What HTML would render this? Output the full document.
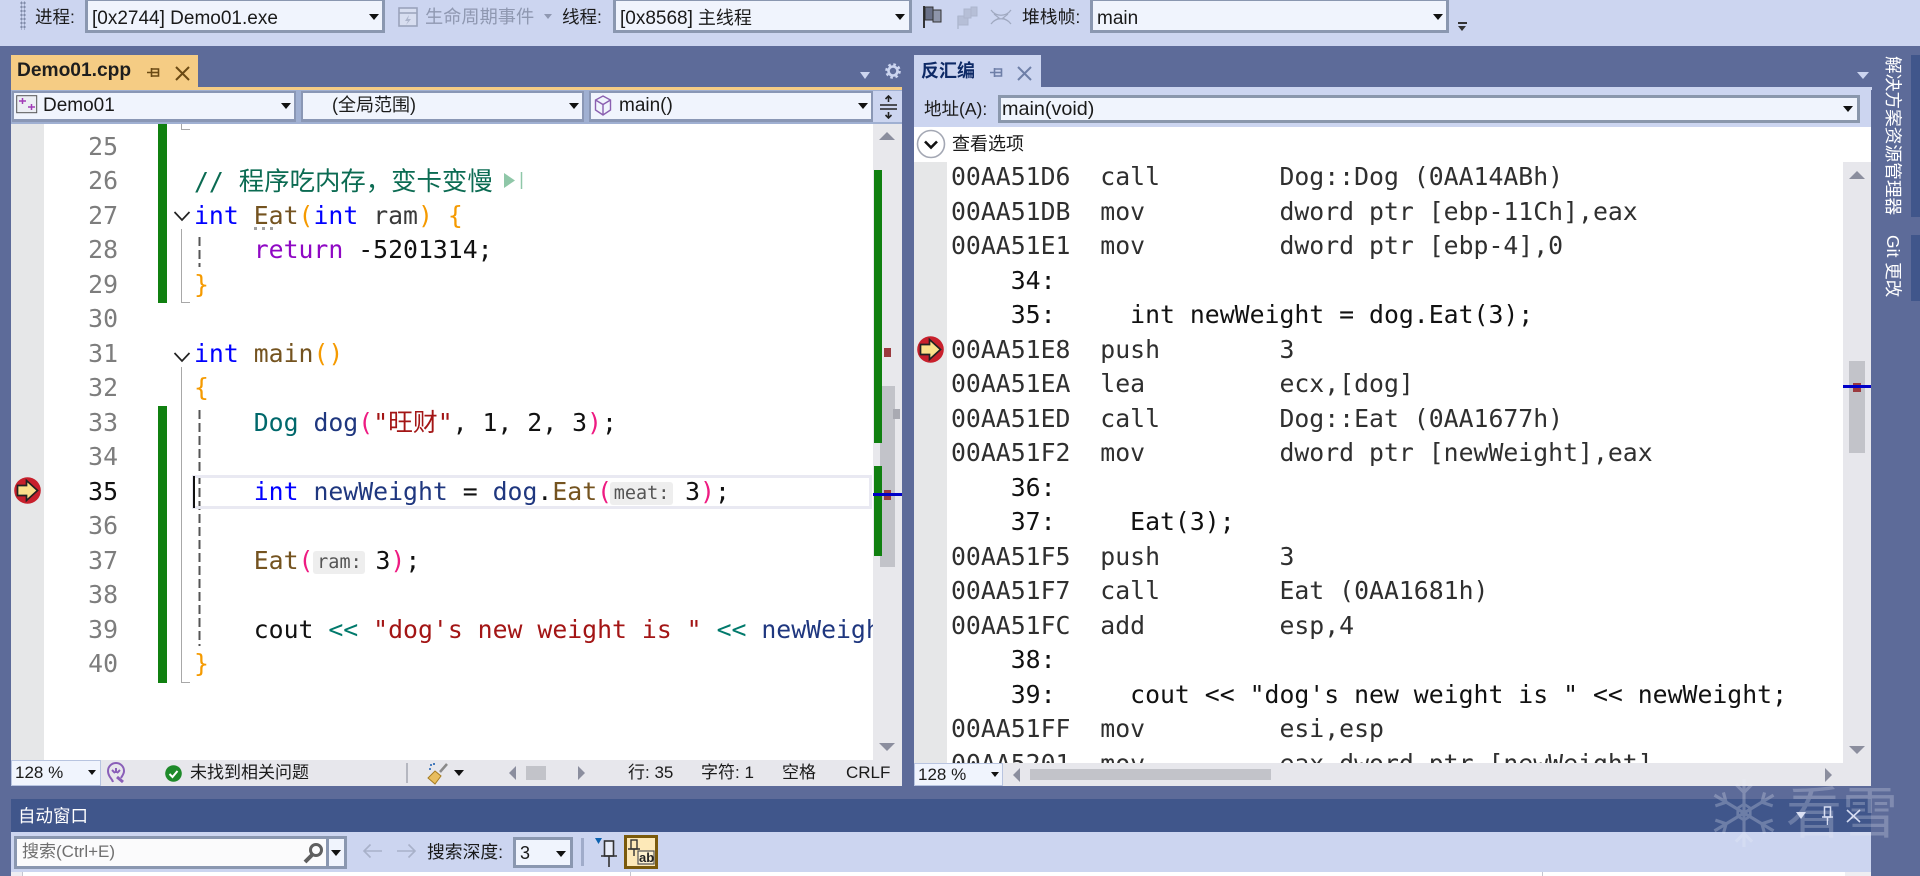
<!DOCTYPE html>
<html lang="zh"><head><meta charset="utf-8"><title>Demo01</title>
<style>
html,body{margin:0;padding:0;width:1920px;height:876px;overflow:hidden;background:#5d6b99}
body{position:relative;font-family:"Liberation Sans","Noto Sans CJK SC",sans-serif;font-size:18px;color:#1a1a1a}
.a,.t,.b,.dd,.up,.dn,.lf,.rt,svg{position:absolute}
.t{white-space:pre;line-height:24px}
.b{box-sizing:border-box}
.cb{position:absolute;box-sizing:border-box;border:3px solid #8a97b0;background:#f0f4fd;white-space:pre;line-height:26px;padding-left:4px}
.la{font-size:19px}
.dd{width:0;height:0;border-left:5.5px solid transparent;border-right:5.5px solid transparent;border-top:6px solid #111}
.up{width:0;height:0;border-left:8px solid transparent;border-right:8px solid transparent;border-bottom:8px solid #8b8e9e}
.dn{width:0;height:0;border-left:8px solid transparent;border-right:8px solid transparent;border-top:8px solid #8b8e9e}
.lf{width:0;height:0;border-top:7px solid transparent;border-bottom:7px solid transparent;border-right:7px solid #8b8e9e}
.rt{width:0;height:0;border-top:7px solid transparent;border-bottom:7px solid transparent;border-left:7px solid #8b8e9e}
.m{font-family:"DejaVu Sans Mono","Noto Sans CJK SC",monospace;font-size:24.8px;line-height:34.5px;white-space:normal}
.m div{height:34.5px;white-space:pre}
.n{color:#7d7d7d;text-align:right}
.k{color:#0000ff}.f{color:#74531f}.o{color:#f59a00}.p{color:#ee1b82}.r{color:#8f08c4}.c{color:#0b6b52}.y{color:#00686b}.v{color:#1f377f}.s{color:#a31515}.l{color:#00796b}
.h{display:inline-block;box-sizing:border-box;height:23px;line-height:23px;background:#eeeeee;color:#555;font-size:18.5px;border-radius:3px;text-align:center;vertical-align:1px}
.as{color:#2f2f2f}
</style></head><body>

<!-- top toolbar -->
<div class="b" style="left:0;top:0;width:1920px;height:46px;background:#ccd5f0"></div>
<div class="b" style="left:20px;top:1px;width:6px;height:29px;background-image:radial-gradient(#7f8aa8 1px,transparent 1.2px);background-size:3px 4px"></div>
<div class="t" style="left:35px;top:5px;font-size:17.5px">进程:</div>
<div class="cb" style="left:85px;top:-2px;width:300px;height:35px;padding-top:4px"><span class="la">[0x2744] Demo01.exe</span></div>
<div class="dd" style="left:369px;top:14px"></div>
<svg style="left:398px;top:7px" width="20" height="20" viewBox="0 0 20 20"><rect x="1" y="1" width="18" height="18" fill="#d8def0" stroke="#9aa3bb" stroke-width="1.6"/><path d="M1 6h18" stroke="#9aa3bb" stroke-width="1.6"/><path d="M11 8l-4 6h3l-2 4 5-6h-3z" fill="#aeb6cc"/></svg>
<div class="t" style="left:425px;top:5px;font-size:18.2px;color:#8f98b1">生命周期事件</div>
<div class="dd" style="left:544px;top:14px;border-top-color:#8f98b1;border-left-width:4px;border-right-width:4px;border-top-width:5px"></div>
<div class="t" style="left:562px;top:5px;font-size:17.5px">线程:</div>
<div class="cb" style="left:613px;top:-2px;width:299px;height:35px;padding-top:4px"><span class="la">[0x8568]</span> 主线程</div>
<div class="dd" style="left:895px;top:14px"></div>
<svg style="left:922px;top:5px" width="22" height="24" viewBox="0 0 22 24"><path d="M2 1v22" stroke="#222" stroke-width="1.8"/><rect x="3" y="2" width="8" height="13" fill="#6a7189" stroke="#333"/><rect x="11" y="5" width="8" height="12" fill="#8e95aa" stroke="#333"/></svg>
<svg style="left:956px;top:5px" width="24" height="24" viewBox="0 0 24 24" opacity=".6"><g fill="#a9b2c8" stroke="#9aa3b9"><rect x="2" y="11" width="10" height="9"/><rect x="8" y="4" width="7" height="9"/><rect x="15" y="2" width="6" height="9"/></g><path d="M2 11v13" stroke="#9aa3b9" stroke-width="1.4"/></svg>
<svg style="left:990px;top:8px" width="22" height="18" viewBox="0 0 22 18" fill="none" stroke="#a0a9c0" stroke-width="1.2"><path d="M1 2c5 7 15 7 20 0M1 16c5-7 15-7 20 0"/><path d="M4 6l5 4-5 3M18 6l-5 4 5 3"/></svg>
<div class="t" style="left:1022px;top:5px;font-size:17.8px">堆栈帧:</div>
<div class="cb" style="left:1090px;top:-2px;width:359px;height:35px;padding-top:4px"><span class="la">main</span></div>
<div class="dd" style="left:1433px;top:14px"></div>
<div class="b" style="left:1458px;top:22px;width:9px;height:2px;background:#333"></div>
<div class="dd" style="left:1458px;top:26px;border-left-width:4.5px;border-right-width:4.5px;border-top-width:5px;border-top-color:#333"></div>

<!-- left panel tab -->
<div class="b" style="left:11px;top:55px;width:187px;height:32px;background:#f5cc84"></div>
<div class="t" style="left:17px;top:59px;font-weight:bold;font-size:19.2px;color:#1e1e1e">Demo01.cpp</div>
<svg style="left:147px;top:66px" width="13" height="13" viewBox="0 0 13 13"><path d="M0 6.5h5M4.5 2v9M4.500 3h7v7h-7" stroke="#6b4a14" stroke-width="1.6" fill="none"/><path d="M5 6.500h6" stroke="#6b4a14" stroke-width="1.6"/></svg>
<svg style="left:175px;top:66px" width="15" height="15" viewBox="0 0 15 15"><path d="M1 1l13 13M14 1L1 14" stroke="#6b4a14" stroke-width="2"/></svg>
<div class="dd" style="left:860px;top:72px;border-top-color:#ccd5f0;border-left-width:5.5px;border-right-width:5.5px;border-top-width:7px"></div>
<svg style="left:885px;top:63px" width="16" height="16" viewBox="0 0 16 16"><circle cx="8" cy="8" r="4.5" fill="none" stroke="#ccd5f0" stroke-width="2.6"/><circle cx="8" cy="8" r="6.6" fill="none" stroke="#ccd5f0" stroke-width="2.4" stroke-dasharray="2.6 2.6"/></svg>
<div class="b" style="left:11px;top:87px;width:891px;height:4px;background:#f5cc84"></div>
<div class="b" style="left:11px;top:90px;width:891px;height:34px;background:#a0b0d2"></div>
<div class="b" style="left:873px;top:91px;width:29px;height:31px;background:#ccd5f0"></div>

<div class="cb" style="left:12px;top:91px;width:284px;height:31px;padding-left:29px;line-height:25px;border-color:#8a97b5;border-width:2px 2px 3px 2px"><span class="la">Demo01</span></div>
<svg style="left:16px;top:95px" width="22" height="19" viewBox="0 0 22 19"><rect x=".7" y=".7" width="20" height="17" fill="#eceef4" stroke="#555"/><path d="M3 6h7M6.5 3v6M12 12h7M15.5 9v6" stroke="#a13bb8" stroke-width="1.5"/></svg>
<div class="dd" style="left:281px;top:103px"></div>
<div class="cb" style="left:301px;top:91px;width:283px;height:31px;padding-left:29px;line-height:25px;border-color:#8a97b5;border-width:2px 2px 3px 2px">(全局范围)</div>
<div class="dd" style="left:569px;top:103px"></div>
<div class="cb" style="left:589px;top:91px;width:284px;height:31px;padding-left:28px;line-height:25px;border-color:#8a97b5;border-width:2px 2px 3px 2px"><span class="la">main()</span></div>
<svg style="left:594px;top:95px" width="18" height="21" viewBox="0 0 18 21" fill="none" stroke="#8a5fb0" stroke-width="1.4"><path d="M9 1l7.5 4v10L9 20 1.5 15V5zM1.5 5L9 9.5 16.5 5M9 9.5V20"/></svg>
<div class="dd" style="left:858px;top:103px"></div>
<svg style="left:880px;top:95px" width="17" height="24" viewBox="0 0 17 24" fill="none" stroke="#222" stroke-width="1.6"><path d="M0 10h17M0 14h17M8.5 1v6M8.5 17v6M5.5 4l3-3 3 3M5.5 20l3 3 3-3"/></svg>

<!-- left editor -->
<div class="b" style="left:11px;top:124px;width:862px;height:636px;background:#fff"></div>
<div class="b" style="left:11px;top:124px;width:33px;height:636px;background:#e6e7e8"></div>
<div class="b" style="left:873px;top:124px;width:29px;height:636px;background:#e8e8ec"></div>

<div class="a m n" style="left:60px;top:129.5px;width:58px"><div>25</div><div>26</div><div>27</div><div>28</div><div>29</div><div>30</div><div>31</div><div>32</div><div>33</div><div>34</div><div style="color:#111">35</div><div>36</div><div>37</div><div>38</div><div>39</div><div>40</div></div>

<div class="b" style="left:158px;top:124px;width:9px;height:179px;background:#108010"></div>
<div class="b" style="left:158px;top:406px;width:9px;height:277px;background:#108010"></div>

<!-- outlining -->
<div class="b" style="left:181px;top:124px;width:9px;height:6px;border-left:1.5px solid #a8a8a8;border-bottom:1.5px solid #a8a8a8"></div>
<div class="b" style="left:181px;top:229px;width:9px;height:74px;border-left:1.5px solid #a8a8a8;border-bottom:1.5px solid #a8a8a8"></div>
<div class="b" style="left:181px;top:367px;width:9px;height:316px;border-left:1.5px solid #a8a8a8;border-bottom:1.5px solid #a8a8a8"></div>
<svg style="left:173px;top:210px" width="18" height="12" viewBox="0 0 18 12"><path d="M1.5 2l7.5 8 7.5-8" fill="none" stroke="#222" stroke-width="1.7"/></svg>
<svg style="left:173px;top:351px" width="18" height="12" viewBox="0 0 18 12"><path d="M1.5 2l7.5 8 7.5-8" fill="none" stroke="#222" stroke-width="1.7"/></svg>
<svg style="left:198px;top:237px" width="3" height="30" viewBox="0 0 3 30"><path d="M1.5 0V30" stroke="#555" stroke-width="2" stroke-dasharray="9 4"/></svg>
<svg style="left:198px;top:410px" width="3" height="236" viewBox="0 0 3 236"><path d="M1.5 0V236" stroke="#555" stroke-width="2" stroke-dasharray="9 4"/></svg>

<!-- current line -->
<div class="b" style="left:192px;top:475px;width:680px;height:34px;border:3px solid #e9e9f2"></div>
<div class="b" style="left:193px;top:476px;width:2px;height:32px;background:#111"></div>

<div class="a m" style="left:194px;top:124px;width:679px;height:636px;overflow:hidden;padding-top:5.5px;color:#111;box-sizing:border-box"><div> </div><div class="c">// <span style="font-size:25.4px">程序吃内存，变卡变慢</span></div><div><span class="k">int</span> <span class="f">Eat</span><span class="o">(</span><span class="k">int</span> <span style="color:#3a3a3a">ram</span><span class="o">)</span> <span class="o">{</span></div><div>    <span class="r">return</span> -5201314;</div><div><span class="o">}</span></div><div> </div><div><span class="k">int</span> <span class="f">main</span><span class="o">()</span></div><div><span class="o">{</span></div><div>    <span class="y">Dog</span> <span class="v">dog</span><span class="p">(</span><span class="s">"旺财"</span>, 1, 2, 3<span class="p">)</span>;</div><div> </div><div>    <span class="k">int</span> <span class="v">newWeight</span> = <span class="v">dog</span>.<span class="f">Eat</span><span class="p">(</span><span class="h" style="width:63px;margin:0 12px 0 -2px;">meat:</span>3<span class="p">)</span>;</div><div> </div><div>    <span class="f">Eat</span><span class="p">(</span><span class="h" style="width:52px;margin:0 10px 0 0;">ram:</span>3<span class="p">)</span>;</div><div> </div><div>    cout <span class="l">&lt;&lt;</span> <span class="s">"dog's new weight is "</span> <span class="l">&lt;&lt;</span> <span class="v">newWeight</span>;</div><div><span class="o">}</span></div></div>
<svg style="left:254px;top:226px" width="21" height="5" viewBox="0 0 21 5" fill="#a0a0a0"><rect x="0" y="1" width="3" height="3"/><rect x="8" y="1" width="3" height="3"/><rect x="16" y="1" width="3" height="3"/></svg>
<svg style="left:504px;top:171px" width="19" height="19" viewBox="0 0 19 19"><path d="M0 2l11 7.500L0 17z" fill="#8fc7a8"/><path d="M17.500 1v17" stroke="#8fc7a8" stroke-width="1.500"/></svg>

<!-- left scrollbar -->
<div class="up" style="left:879px;top:132px"></div>
<div class="dn" style="left:879px;top:743px"></div>
<div class="b" style="left:880px;top:386px;width:15px;height:181px;background:#c2c3c9"></div>
<div class="b" style="left:893px;top:409px;width:7px;height:10px;background:#a9aab2"></div>
<div class="b" style="left:874px;top:170px;width:8px;height:273px;background:#108010"></div>
<div class="b" style="left:874px;top:466px;width:8px;height:90px;background:#108010"></div>
<div class="b" style="left:884px;top:348px;width:7px;height:9px;background:#9b3a3f"></div>
<div class="b" style="left:884px;top:490px;width:7px;height:10px;background:#9b3a3f"></div>
<div class="b" style="left:873px;top:493px;width:29px;height:3px;background:#0000c8"></div>

<svg style="left:14px;top:477px" width="27" height="27" viewBox="0 0 27 27"><circle cx="13.500" cy="13.500" r="13.300" fill="#c8202c"/><path d="M3.500 8.500h9V3.500l11 10-11 10v-5h-9z" fill="#fbe08a" stroke="#222" stroke-width="1.700"/></svg>

<!-- left status -->
<div class="b" style="left:11px;top:760px;width:891px;height:26px;background:#e7e7ec"></div>
<div class="b" style="left:11px;top:760px;width:90px;height:26px;background:#f0f4fd;border:1.500px solid #b8c4e0"></div>
<div class="t" style="left:15px;top:761px;font-size:17px">128 %</div>
<div class="dd" style="left:88px;top:770px;border-left-width:4.500px;border-right-width:4.500px;border-top-width:5px"></div>
<svg style="left:105px;top:761px" width="24" height="24" viewBox="0 0 24 24" fill="none" stroke="#8a5fb8" stroke-width="2"><path d="M8 21c-1-4-5-5-5-11a8 8 0 0 1 16 0c0 3-2 5-3 7"/><path d="M11 7v5M7 9l3 3M15 9l-3 3"/><path d="M12 16l6 5" stroke-width="3"/></svg>
<svg style="left:165px;top:765px" width="17" height="17" viewBox="0 0 17 17"><circle cx="8.500" cy="8.500" r="8.300" fill="#1e8a2a"/><path d="M4.500 9l3 3 5-6" fill="none" stroke="#fff" stroke-width="2"/></svg>
<div class="t" style="left:190px;top:761px;font-size:17px">未找到相关问题</div>
<div class="b" style="left:406px;top:763px;width:1.500px;height:20px;background:#b5b7c0"></div>
<svg style="left:427px;top:762px" width="22" height="23" viewBox="0 0 22 23"><path d="M20 2l-7 8" stroke="#8a8a8a" stroke-width="2.500"/><path d="M8 9l6 5-6 8-7-6z" fill="#e8bd5e" stroke="#a67c21"/><path d="M3 3h2M7 1v2M2 7h2" stroke="#1d5fb0" stroke-width="1.600"/></svg>
<div class="dd" style="left:454px;top:770px;border-left-width:5px;border-right-width:5px;border-top-width:6px"></div>
<div class="lf" style="left:509px;top:766px"></div>
<div class="b" style="left:526px;top:766px;width:20px;height:14px;background:#c2c3c9"></div>
<div class="rt" style="left:578px;top:766px"></div>
<div class="t" style="left:628px;top:761px;font-size:17px">行: 35</div>
<div class="t" style="left:701px;top:761px;font-size:17px">字符: 1</div>
<div class="t" style="left:782px;top:761px;font-size:17px">空格</div>
<div class="t" style="left:846px;top:761px;font-size:17px">CRLF</div>

<!-- right panel -->
<div class="b" style="left:914px;top:55px;width:127px;height:32px;background:#ccd5f0"></div>
<div class="t" style="left:921px;top:59px;font-weight:bold;font-size:18px;color:#0e2a66">反汇编</div>
<svg style="left:990px;top:66px" width="13" height="13" viewBox="0 0 13 13"><path d="M0 6.500h5M4.500 2v9M4.500 3h7v7h-7" stroke="#6e7fa8" stroke-width="1.600" fill="none"/><path d="M5 6.500h6" stroke="#6e7fa8" stroke-width="1.600"/></svg>
<svg style="left:1017px;top:66px" width="15" height="15" viewBox="0 0 15 15"><path d="M1 1l13 13M14 1L1 14" stroke="#6e7fa8" stroke-width="2"/></svg>
<div class="dd" style="left:1857px;top:72px;border-top-color:#ccd5f0;border-left-width:6px;border-right-width:6px;border-top-width:7px"></div>
<div class="b" style="left:914px;top:87px;width:958px;height:3px;background:#ccd5f0"></div>
<div class="b" style="left:914px;top:90px;width:957px;height:37px;background:#ccd5f0"></div>
<div class="t" style="left:924px;top:97px;font-size:17.500px">地址(A):</div>
<div class="cb" style="left:998px;top:95px;width:862px;height:28px;padding-left:1px;line-height:23px;border-color:#8a97ac"><span style="font-size:19.8px">main(void)</span></div>
<div class="dd" style="left:1843px;top:106px"></div>
<div class="b" style="left:914px;top:127px;width:957px;height:636px;background:#fff"></div>
<svg style="left:916px;top:129px" width="30" height="30" viewBox="0 0 30 30"><circle cx="15" cy="15" r="13.500" fill="#fff" stroke="#a4a8b4" stroke-width="1.600"/><path d="M9 12.500l6 6 6-6" fill="none" stroke="#111" stroke-width="2.600"/></svg>
<div class="t" style="left:952px;top:132px;font-size:18px">查看选项</div>
<div class="b" style="left:914px;top:162px;width:33px;height:601px;background:#e6e7e8"></div>
<div class="b" style="left:1843px;top:162px;width:28px;height:601px;background:#e7e7ec"></div>
<div class="up" style="left:1849px;top:171px"></div>
<div class="dn" style="left:1849px;top:746px"></div>

<div class="a m as" style="left:951px;top:160px;width:892px;height:603px;overflow:hidden"><div>00AA51D6  call        Dog::Dog (0AA14ABh)</div><div>00AA51DB  mov         dword ptr [ebp-11Ch],eax</div><div>00AA51E1  mov         dword ptr [ebp-4],0</div><div style="color:#111">    34:</div><div style="color:#111">    35:     int newWeight = dog.Eat(3);</div><div>00AA51E8  push        3</div><div>00AA51EA  lea         ecx,[dog]</div><div>00AA51ED  call        Dog::Eat (0AA1677h)</div><div>00AA51F2  mov         dword ptr [newWeight],eax</div><div style="color:#111">    36:</div><div style="color:#111">    37:     Eat(3);</div><div>00AA51F5  push        3</div><div>00AA51F7  call        Eat (0AA1681h)</div><div>00AA51FC  add         esp,4</div><div style="color:#111">    38:</div><div style="color:#111">    39:     cout &lt;&lt; "dog's new weight is " &lt;&lt; newWeight;</div><div>00AA51FF  mov         esi,esp</div><div>00AA5201  mov         eax,dword ptr [newWeight]</div></div>

<div class="b" style="left:1849px;top:361px;width:16px;height:92px;background:#c2c3c9"></div>
<div class="b" style="left:1853px;top:383px;width:8px;height:9px;background:#9b3a3f"></div>
<div class="b" style="left:1843px;top:385px;width:28px;height:3px;background:#0000c8"></div>
<svg style="left:917px;top:335.500px" width="27" height="27" viewBox="0 0 27 27"><circle cx="13.500" cy="13.500" r="13.300" fill="#c8202c"/><path d="M3.500 8.500h9V3.500l11 10-11 10v-5h-9z" fill="#fbe08a" stroke="#222" stroke-width="1.700"/></svg>

<div class="b" style="left:914px;top:763px;width:957px;height:23px;background:#e7e7ec"></div>
<div class="b" style="left:914px;top:763px;width:89px;height:23px;background:#f0f4fd;border:1.500px solid #b8c4e0"></div>
<div class="t" style="left:918px;top:762.500px;font-size:17px">128 %</div>
<div class="dd" style="left:991px;top:772px;border-left-width:4.500px;border-right-width:4.500px;border-top-width:5px"></div>
<div class="lf" style="left:1013px;top:768px"></div>
<div class="b" style="left:1030px;top:769px;width:241px;height:11px;background:#c2c3c9"></div>
<div class="rt" style="left:1825px;top:768px"></div>

<!-- right strip -->
<div class="b" style="left:1911px;top:55px;width:9px;height:162px;background:#40568b"></div>
<div class="b" style="left:1911px;top:235px;width:9px;height:66px;background:#40568b"></div>
<div class="t" style="left:1882px;top:56px;writing-mode:vertical-rl;text-orientation:sideways;font-size:17.7px;line-height:22px;color:#fff">解决方案资源管理器</div>
<div class="t" style="left:1882px;top:235px;writing-mode:vertical-rl;text-orientation:sideways;font-size:17.5px;line-height:22px;color:#fff">Git 更改</div>

<!-- bottom panel -->
<div class="b" style="left:11px;top:799px;width:1860px;height:33px;background:#40568b"></div>
<div class="t" style="left:18px;top:804px;font-size:17.500px;color:#fff">自动窗口</div>
<div class="b" style="left:11px;top:832px;width:1860px;height:40px;background:#ccd5f0"></div>
<div class="b" style="left:11px;top:872px;width:1860px;height:4px;background:#fff"></div>
<div class="b" style="left:11px;top:872px;width:12px;height:4px;background:#eeeef2;border-right:1px solid #c4c6d0"></div>
<div class="b" style="left:630px;top:872px;width:1px;height:4px;background:#c4c6d0"></div>
<div class="b" style="left:1542px;top:872px;width:1px;height:4px;background:#c4c6d0"></div>
<div class="b" style="left:1845px;top:872px;width:26px;height:4px;background:#eeeef2"></div>

<div class="b" style="left:14px;top:836px;width:333px;height:33px;background:#f0f4fd;border:3px solid #8a97b0"></div>
<div class="b" style="left:17px;top:839px;width:309px;height:27px;background:#fbfbfc"></div>
<div class="b" style="left:326px;top:839px;width:3px;height:27px;background:#8a97b0"></div>
<div class="t" style="left:22px;top:840px;font-size:17px;color:#6f6f6f">搜索(Ctrl+E)</div>
<svg style="left:303px;top:842px" width="21" height="22" viewBox="0 0 21 22" fill="none" stroke="#5f5f5f"><circle cx="13" cy="8" r="5.500" stroke-width="3"/><path d="M9 13l-7 7" stroke-width="4"/></svg>
<div class="dd" style="left:331px;top:850px;border-left-width:5px;border-right-width:5px;border-top-width:6px"></div>
<svg style="left:362px;top:843px" width="20" height="16" viewBox="0 0 20 16" fill="none" stroke="#a8b1c9" stroke-width="1.600"><path d="M20 8H2M8.500 1.500L2 8l6.500 6.500"/></svg>
<svg style="left:397px;top:843px" width="20" height="16" viewBox="0 0 20 16" fill="none" stroke="#a8b1c9" stroke-width="1.600"><path d="M0 8h18M11.500 1.500L18 8l-6.500 6.500"/></svg>
<div class="t" style="left:427px;top:840px;font-size:17.800px">搜索深度:</div>
<div class="b" style="left:513px;top:837px;width:60px;height:31px;background:#f0f4fd;border:3px solid #8a97b0"></div>
<div class="t" style="left:520px;top:841px;font-size:18px">3</div>
<div class="dd" style="left:556px;top:851px;border-left-width:5px;border-right-width:5px;border-top-width:6px"></div>
<div class="b" style="left:581px;top:838px;width:2.500px;height:28px;background:#a0acca"></div>
<svg style="left:595px;top:838px" width="22" height="30" viewBox="0 0 22 30"><path d="M0 0h7l-3.500 6z" fill="#0b62b0"/><rect x="9.500" y="3" width="9" height="15" fill="#e8ecf8" stroke="#333" stroke-width="1.600"/><path d="M6 18h16M14 18v11" stroke="#333" stroke-width="1.600"/></svg>
<div class="b" style="left:624px;top:835px;width:34px;height:34px;background:#fde9b8;border:3px solid #7a5a0c"></div>
<svg style="left:628px;top:839px" width="27" height="27" viewBox="0 0 27 27"><rect x="3" y="1" width="6" height="9" fill="#fde9b8" stroke="#333" stroke-width="1.400"/><path d="M0 10h12M6 10v7" stroke="#333" stroke-width="1.400"/><path d="M10 12h16v13H10z" fill="#fdf1d0" stroke="#555" stroke-width="1.200"/></svg>
<div class="t" style="left:639px;top:851px;font-family:'Liberation Sans',sans-serif;font-size:13px;line-height:14px;font-weight:bold;color:#222">ab</div>

<!-- bottom panel buttons -->
<div class="dd" style="left:1796px;top:812px;border-top-color:#d5dcf2;border-left-width:5.500px;border-right-width:5.500px;border-top-width:7px"></div>
<svg style="left:1822px;top:806px" width="11" height="20" viewBox="0 0 11 20" fill="none" stroke="#d5dcf2" stroke-width="1.500"><rect x="2.500" y="1" width="6" height="10"/><path d="M0 11h11M5.500 11v8"/></svg>
<svg style="left:1846px;top:809px" width="15" height="14" viewBox="0 0 15 14"><path d="M1 1l13 12M14 1L1 13" stroke="#d5dcf2" stroke-width="1.600"/></svg>

<!-- watermark -->
<svg style="left:1710px;top:777px;opacity:.26" width="68" height="72" viewBox="0 0 76 80" fill="none" stroke="#eef0f8" stroke-width="3.500">
<path d="M38 2v76M5 20l66 40M71 20L5 60"/>
<path d="M29 8l9 9 9-9M29 72l9-9 9 9M6 32l12-4-3-11M70 48l-12 4 3 11M70 32l-12-4 3-11M6 48l12 4-3 11"/>
<path d="M38 30l7 4.500v9L38 48l-7-4.500v-9z" stroke-width="3"/>
</svg>
<div class="t" style="left:1786px;top:782px;width:120px;font-size:56px;line-height:64px;letter-spacing:0;color:#eef0f8;opacity:.24">看雪</div>

</body></html>
